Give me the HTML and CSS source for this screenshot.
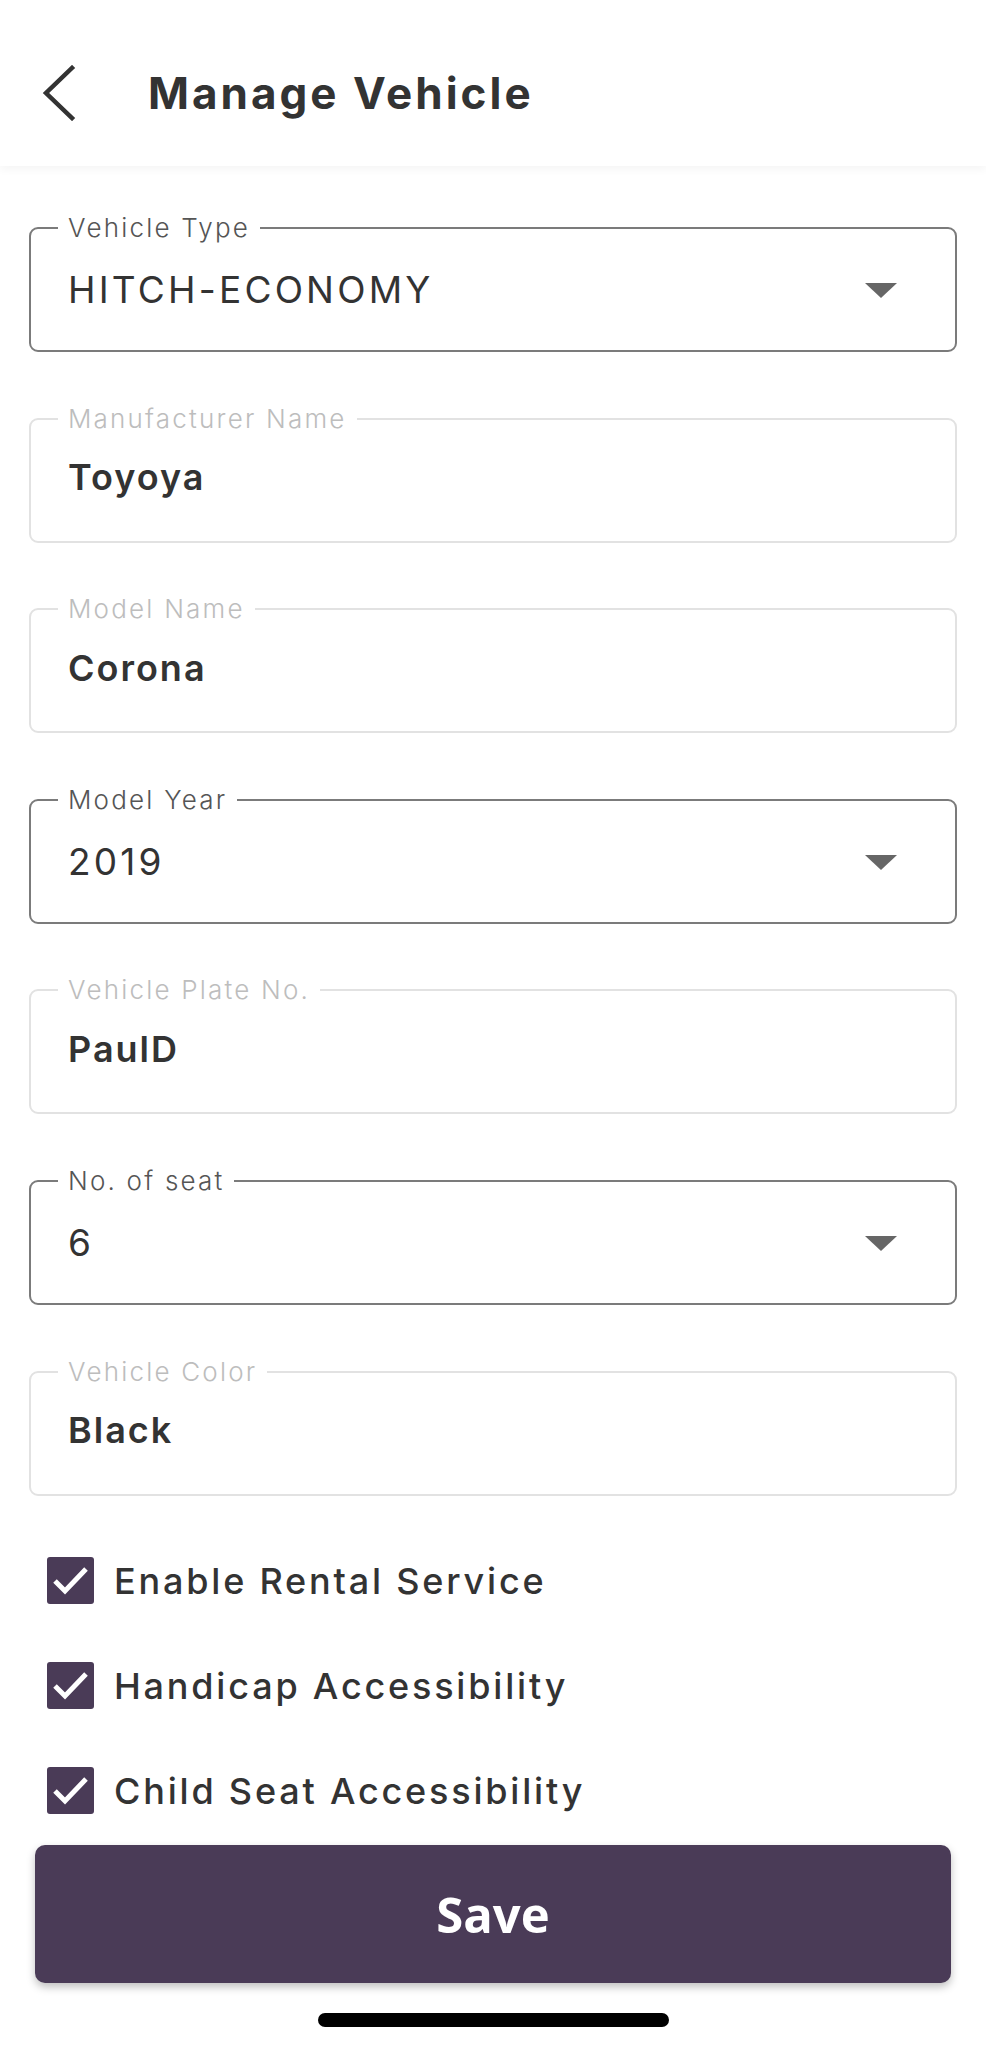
FILE: index.html
```html
<!DOCTYPE html>
<html lang="en">
<head>
    <meta charset="UTF-8">
    <meta name="viewport" content="width=device-width, initial-scale=1.0">
    <title>Manage Vehicle</title>
    <link rel="stylesheet" href="styles.css">
</head>
<body>
    <header class="top-bar">
        <button class="back-button" aria-label="Back">
            <svg width="40" height="56" viewBox="0 0 40 56">
                <path d="M31 3 L5 28 L31 53" fill="none" stroke="#333" stroke-width="4.5" stroke-linecap="square"/>
            </svg>
        </button>
        <h1 class="page-title">Manage Vehicle</h1>
    </header>

    <main class="vehicle-form">
        <fieldset class="field">
            <legend>Vehicle Type</legend>
            <div class="field-value">
                <span>HITCH-ECONOMY</span>
                <span class="caret"></span>
            </div>
        </fieldset>

        <fieldset class="field disabled">
            <legend>Manufacturer Name</legend>
            <div class="field-value"><span>Toyoya</span></div>
        </fieldset>

        <fieldset class="field disabled">
            <legend>Model Name</legend>
            <div class="field-value"><span>Corona</span></div>
        </fieldset>

        <fieldset class="field">
            <legend>Model Year</legend>
            <div class="field-value">
                <span>2019</span>
                <span class="caret"></span>
            </div>
        </fieldset>

        <fieldset class="field disabled">
            <legend>Vehicle Plate No.</legend>
            <div class="field-value"><span>PaulD</span></div>
        </fieldset>

        <fieldset class="field">
            <legend>No. of seat</legend>
            <div class="field-value">
                <span>6</span>
                <span class="caret"></span>
            </div>
        </fieldset>

        <fieldset class="field disabled">
            <legend>Vehicle Color</legend>
            <div class="field-value"><span>Black</span></div>
        </fieldset>

        <div class="options">
            <label class="option">
                <span class="check">
                    <svg width="40" height="32" viewBox="0 0 40 32"><path d="M4 16 L14 26 L35 4" fill="none" stroke="#fff" stroke-width="5"/></svg>
                </span>
                Enable Rental Service
            </label>
            <label class="option">
                <span class="check">
                    <svg width="40" height="32" viewBox="0 0 40 32"><path d="M4 16 L14 26 L35 4" fill="none" stroke="#fff" stroke-width="5"/></svg>
                </span>
                Handicap Accessibility
            </label>
            <label class="option">
                <span class="check">
                    <svg width="40" height="32" viewBox="0 0 40 32"><path d="M4 16 L14 26 L35 4" fill="none" stroke="#fff" stroke-width="5"/></svg>
                </span>
                Child Seat Accessibility
            </label>
        </div>
    </main>

    <footer class="bottom-area">
        <button class="save-button">Save</button>
        <div class="home-indicator"></div>
    </footer>
</body>
</html>
```

FILE: styles.css
```css
* {
    margin: 0;
    padding: 0;
    box-sizing: border-box;
}

body {
    font-family: Inter, "Noto Sans", sans-serif;
    background: #fff;
    color: #333;
    width: 986px;
    height: 2048px;
    display: flex;
    flex-direction: column;
}

.top-bar {
    height: 166px;
    display: flex;
    align-items: center;
    padding-left: 41px;
    padding-top: 20px;
    background: #fff;
    box-shadow: 0 4px 8px rgba(0,0,0,0.04);
}

.back-button {
    background: none;
    border: none;
    width: 40px;
    height: 56px;
    display: flex;
    cursor: pointer;
}

.page-title {
    font-size: 44px;
    font-weight: 700;
    color: #333;
    margin-left: 67px;
    letter-spacing: 3px;
}

.vehicle-form {
    padding: 47px 29px 0;
    display: flex;
    flex-direction: column;
    gap: 51.6px;
}

.field {
    border: 2px solid #7b7b7b;
    border-radius: 9px;
    padding: 0 37px;
    min-width: 0;
}

.field legend {
    font-size: 26px;
    line-height: 30px;
    font-weight: 300;
    color: #555;
    padding: 0 10px;
    margin-left: -10px;
    letter-spacing: 2.2px;
}

.field-value {
    height: 107px;
    padding-bottom: 14px;
    display: flex;
    align-items: center;
    justify-content: space-between;
    font-size: 37px;
    font-weight: 400;
    color: #333;
    letter-spacing: 3.2px;
}

.field.disabled {
    border-color: #e2e2e2;
}

.field.disabled legend {
    color: #bdbdbd;
}

.field.disabled .field-value {
    font-weight: 600;
    font-size: 36px;
    letter-spacing: 2px;
    padding-bottom: 20px;
}

.caret {
    width: 0;
    height: 0;
    border-left: 16px solid transparent;
    border-right: 16px solid transparent;
    border-top: 15px solid #666;
    margin-right: 21px;
    margin-top: 2px;
}

.options {
    margin-top: 10px;
    padding-left: 18px;
    display: flex;
    flex-direction: column;
    gap: 58px;
}

.option {
    display: flex;
    align-items: center;
    gap: 20px;
    font-size: 36px;
    font-weight: 500;
    color: #333;
    height: 47px;
    letter-spacing: 2.8px;
}

.check {
    width: 47px;
    height: 47px;
    border-radius: 3px;
    background: #4a3b57;
    display: flex;
    align-items: center;
    justify-content: center;
}

.bottom-area {
    margin-top: auto;
    padding: 0 35px 21px;
    display: flex;
    flex-direction: column;
    align-items: center;
}

.save-button {
    width: 100%;
    height: 138px;
    background: #4a3b57;
    border: none;
    border-radius: 10px;
    color: #fff;
    font-family: "Open Sans", Inter, sans-serif;
    font-size: 49px;
    font-weight: 700;
    box-shadow: 0 4px 8px rgba(0,0,0,0.25);
    cursor: pointer;
}

.home-indicator {
    width: 351px;
    height: 14px;
    background: #000;
    border-radius: 7px;
    margin-top: 30px;
}
```
